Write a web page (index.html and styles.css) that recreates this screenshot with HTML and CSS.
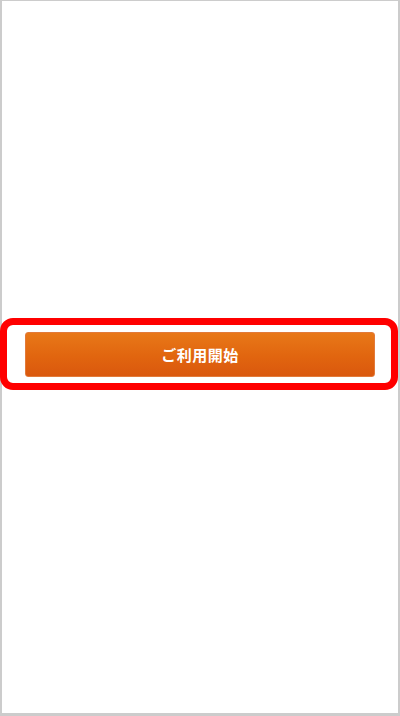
FILE: index.html
```html
<!DOCTYPE html>
<html lang="ja">
<head>
<meta charset="utf-8">
<link rel="stylesheet" href="styles.css">
</head>
<body>
<div class="screen">
  <div class="highlight">
    <button class="start-btn">ご利用開始</button>
  </div>
</div>
</body>
</html>
```
FILE: styles.css
```css
html, body {
  margin: 0;
  padding: 0;
  background: #ffffff;
}
.screen {
  width: 400px;
  height: 716px;
  box-sizing: border-box;
  border-style: solid;
  border-color: #cccccc;
  border-width: 1px 2px 3px 2px;
  padding-top: 317px;
  font-family: "Noto Sans CJK JP", "Liberation Sans", sans-serif;
}
.highlight {
  margin-left: -2px;
  margin-right: 0;
  height: 72px;
  box-sizing: border-box;
  border: 7px solid #ff0000;
  border-radius: 13px;
  background: #ffffff;
  padding: 7px 16px 0 18px;
}
.start-btn {
  display: flex;
  align-items: center;
  justify-content: center;
  width: 100%;
  height: 45px;
  box-sizing: border-box;
  border: 1px solid #e27a3a;
  border-radius: 3px;
  background: linear-gradient(to bottom, #e87818 0%, #e1650f 55%, #da580e 100%);
  color: #ffffff;
  font-family: "Noto Sans CJK JP", sans-serif;
  font-weight: bold;
  font-size: 15px;
  letter-spacing: 0.5px;
  padding: 0;
  margin: 0;
}
```
